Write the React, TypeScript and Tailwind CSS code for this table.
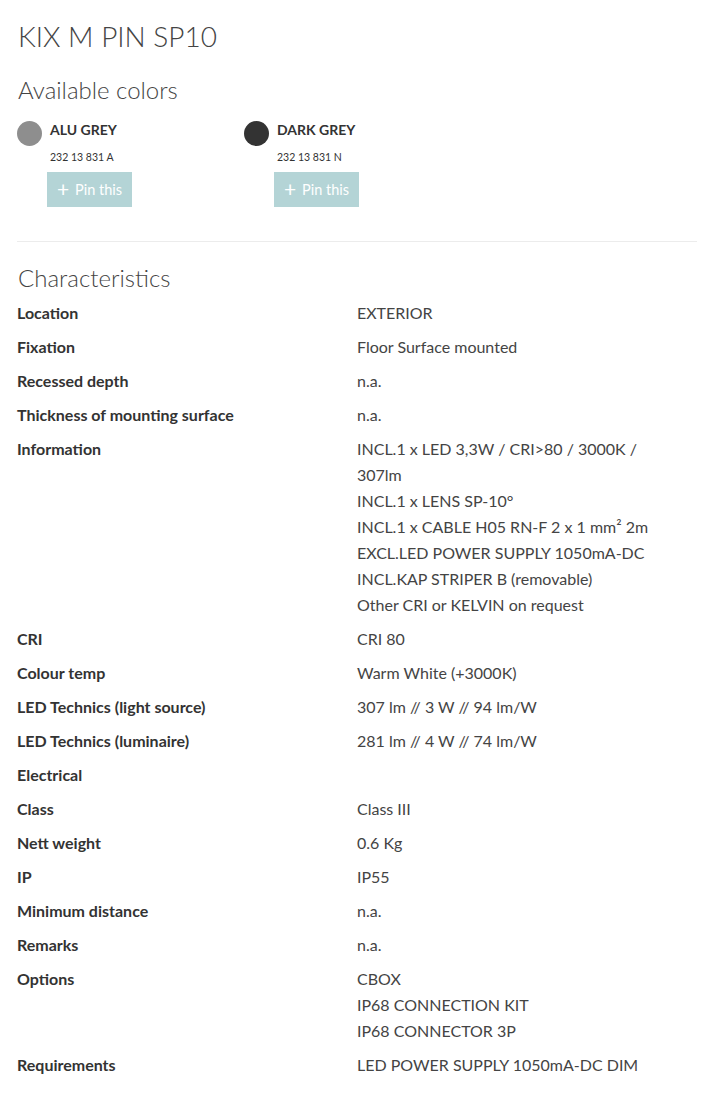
import React from "react";

const rows: { label: string; values: string[] }[] = [
  { label: "Location", values: ["EXTERIOR"] },
  { label: "Fixation", values: ["Floor Surface mounted"] },
  { label: "Recessed depth", values: ["n.a."] },
  { label: "Thickness of mounting surface", values: ["n.a."] },
  {
    label: "Information",
    values: [
      "INCL.1 x LED 3,3W / CRI>80 / 3000K / 307lm",
      "INCL.1 x LENS SP-10°",
      "INCL.1 x CABLE H05 RN-F 2 x 1 mm² 2m",
      "EXCL.LED POWER SUPPLY 1050mA-DC",
      "INCL.KAP STRIPER B (removable)",
      "Other CRI or KELVIN on request",
    ],
  },
  { label: "CRI", values: ["CRI 80"] },
  { label: "Colour temp", values: ["Warm White (+3000K)"] },
  { label: "LED Technics (light source)", values: ["307 lm // 3 W // 94 lm/W"] },
  { label: "LED Technics (luminaire)", values: ["281 lm // 4 W // 74 lm/W"] },
  { label: "Electrical", values: [] },
  { label: "Class", values: ["Class III"] },
  { label: "Nett weight", values: ["0.6 Kg"] },
  { label: "IP", values: ["IP55"] },
  { label: "Minimum distance", values: ["n.a."] },
  { label: "Remarks", values: ["n.a."] },
  { label: "Options", values: ["CBOX", "IP68 CONNECTION KIT", "IP68 CONNECTOR 3P"] },
  { label: "Requirements", values: ["LED POWER SUPPLY 1050mA-DC DIM"] },
];

const colors = [
  { name: "ALU GREY", code: "232 13 831 A", swatch: "bg-[#8e8e8e]" },
  { name: "DARK GREY", code: "232 13 831 N", swatch: "bg-[#333333]" },
];

export default function App() {
  return (
    <div className="bg-white min-h-[1097px] pl-[17px] pr-[11px] pt-[18px] text-[#333] font-['Lato','Open_Sans',sans-serif]">
      <h1 className="text-[28px] font-light leading-[36px] text-[#444] pl-px">KIX M PIN SP10</h1>
      <h2 className="mt-[21px] text-[24px] font-light leading-[30px] text-[#444] pl-px">Available colors</h2>
      <div className="mt-[15px] flex">
        {colors.map((c) => (
          <div key={c.name} className="w-[227px] flex">
            <div className={`w-[25px] h-[25px] rounded-full ${c.swatch} mt-[1px]`} />
            <div className="ml-[8px]">
              <div className="text-[14px] font-bold leading-[16px] text-[#333] pt-[2px]">{c.name}</div>
              <div className="mt-[12px] text-[10.5px] leading-[14px] text-[#333]">{c.code}</div>
              <button className="mt-[8px] -ml-[3px] w-[85px] h-[35px] bg-[#b4d4d6] text-white text-[14.5px] flex items-center justify-center gap-[6px] font-['Lato',sans-serif]">
                <span className="text-[21px] leading-none font-normal -mt-[2px]">+</span>
                <span>Pin this</span>
              </button>
            </div>
          </div>
        ))}
      </div>
      <div className="mt-[34px] border-t border-[#ececec]" />
      <h2 className="mt-[21px] text-[24px] font-light leading-[30px] text-[#444] pl-px">Characteristics</h2>
      <div className="mt-[7px] flex flex-col gap-[8px]">
        {rows.map((r) => (
          <div key={r.label} className="flex text-[16px] leading-[26px]">
            <div className="w-[340px] font-bold text-[#333]">{r.label}</div>
            <div className="w-[300px] text-[#444]">
              {r.values.length === 0 ? <span>&nbsp;</span> : r.values.map((v) => <div key={v}>{v}</div>)}
            </div>
          </div>
        ))}
      </div>
    </div>
  );
}
